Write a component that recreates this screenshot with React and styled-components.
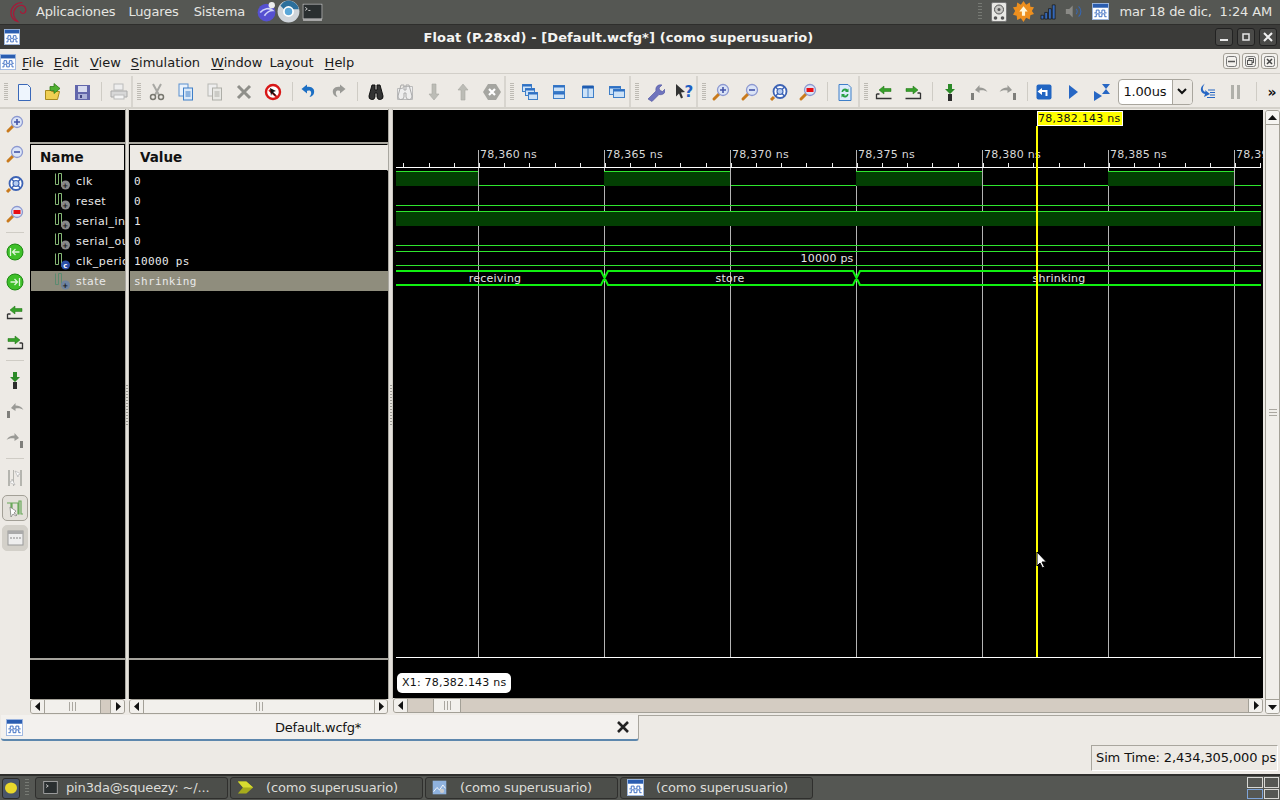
import React from "react";
import styled, { createGlobalStyle } from "styled-components";

const Global = createGlobalStyle`
  html, body { margin: 0; padding: 0; width: 1280px; height: 800px; overflow: hidden; background: #edeae5; }
  * { box-sizing: border-box; }
  #root { width: 1280px; height: 800px; }
`;
const Screen = styled.div`
  width: 1280px; height: 800px; display: flex; flex-direction: column;
  font-family: "DejaVu Sans", sans-serif; font-size: 13px; color: #111; background: #edeae5;
`;
const SysPanel = styled.div`
  height: 25px; background: #555753; border-bottom: 1px solid #2e2e2c; display: flex; align-items: center;
  color: #e6e6e2; padding: 0 8px 1px 9px; letter-spacing: -.15px;
`;
const PanelItem = styled.span`
  margin-left: ${p => p.$ml}px; white-space: nowrap;
`;
const PanelIcon = styled.span`
  display: flex; margin-left: ${p => p.$ml}px;
`;
const PanelGap = styled.div` flex: 1; `;
const PanelGrip = styled.div`
  width: 4px; height: 18px; margin-right: 9px;
  background: repeating-linear-gradient(to bottom, #777a74 0, #777a74 1px, transparent 1px, transparent 3px);
`;
const TitleBar = styled.div`
  height: 24px; background: #3b3b39; display: flex; align-items: center; padding: 0 3px 0 4px;
`;
const Title = styled.div`
  flex: 1; text-align: center; color: #f4f4f2; font-weight: bold; font-size: 13px; padding-left: 6px; letter-spacing: .1px;
`;
const WinBtn = styled.div`
  width: 18px; height: 18px; margin-left: 4px; border: 1px solid #222; border-radius: 3px; background: #4a4a48;
  display: flex; align-items: center; justify-content: center;
`;
const MenuBar = styled.div`
  height: 25px; background: #edeae5; display: flex; align-items: center; border-bottom: 1px solid #d2cfc9; padding: 2px 2px 0 0;
`;
const MenuItem = styled.span`
  margin-left: ${p => p.$ml}px; white-space: nowrap; color: #1a1a1a;
  u { text-underline-offset: 2px; }
`;
const MdiBtn = styled.div`
  width: 17px; height: 16px; margin: -2px 0 0 2px; border: 1px solid #a5a198; border-radius: 3px; background: #f3f1ed;
  display: flex; align-items: center; justify-content: center;
`;
const ToolBar = styled.div`
  height: 35px; background: #edeae5; display: flex; align-items: stretch; border-bottom: 2px solid #d4d1ca; padding-top: 2px;
`;
const ToolGroup = styled.div`
  display: flex; align-items: center; width: ${p => p.$w ? `${p.$w}px` : "auto"}; flex: none;
  border-right: ${p => p.$end ? "0" : "2px solid #d8d5cf"};
`;
const Grip = styled.div`
  width: ${p => p.$w}px; height: 100%; display: flex; align-items: center; padding-left: 4px; flex: none;
  &::before { content: ""; width: 4px; height: 18px;
    background: repeating-linear-gradient(to bottom, #bdbab3 0, #bdbab3 1px, transparent 1px, transparent 2px); }
`;
const Sep = styled.div`
  width: ${p => p.$w}px; height: 100%; padding: 6px 0 6px 5px; flex: none;
  &::before { content: ""; display: block; width: 1px; height: 100%; background: #cfccc5; }
`;
const Btn = styled.div`
  width: 29px; height: ${p => p.$h || 30}px; flex: none; display: flex; align-items: center; justify-content: center;
`;
const CheckedBtn = styled.div`
  width: 26px; height: 26px; margin: 2px 0 2px 2px; flex: none; display: flex; align-items: center; justify-content: center;
  border: 1px solid ${p => p.$border}; border-radius: 5px; background: ${p => p.$bg};
`;
const Combo = styled.div`
  width: 75px; height: 26px; margin-left: 1.5px; border: 1px solid #a9a69e; border-radius: 4px; background: #fff;
  display: flex; align-items: center; flex: none; padding-left: 5px; font-size: 13px; overflow: hidden; letter-spacing: -.2px;
`;
const ComboText = styled.span` flex: 1; `;
const ComboArrow = styled.span`
  width: 20px; height: 100%; background: #edeae5; border-left: 1px solid #a9a69e; display: flex; align-items: center; justify-content: center;
`;
const More = styled.span`
  padding-left: 9px; font-size: 14px; font-weight: bold; line-height: 16px;
`;
const Main = styled.div`
  height: 605px; display: flex; align-items: stretch; background: #edeae5;
`;
const SideBar = styled.div`
  width: 30px; flex: none; display: flex; flex-direction: column; background: #edeae5;
`;
const SideSep = styled.div`
  height: 8px; flex: none; padding: 3px 6px 4px;
  &::before { content: ""; display: block; height: 1px; background: #cfccc5; }
`;
const Splitter = styled.div`
  width: ${p => p.$w}px; flex: none; display: flex; align-items: center; justify-content: center;
  background: #e4e1db; border-left: 1px solid #a9a7a0; border-right: 1px solid #c9c6bf; margin-bottom: 15px; padding-top: 1px;
  &::before { content: ""; width: 2px; height: 40px;
    background: repeating-linear-gradient(to bottom, #9c9a93 0, #9c9a93 1px, transparent 1px, transparent 3px); }
`;
const Column = styled.div`
  width: ${p => p.$w}px; flex: none; display: flex; flex-direction: column; padding-top: 1px;
`;
const Blank = styled.div` height: 34px; background: #000; flex: none; border-bottom: 2px solid #aaa8a0; `;
const Header = styled.div`
  height: 27px; background: #edeae5; border: 1px solid #000; border-right-color: ${p => p.$rc || "#000"}; flex: none; display: flex; align-items: center;
  padding: 0 0 2px ${p => p.$pl}px; font-weight: bold; font-size: 13.5px; color: #111;
`;
const Rows = styled.div`
  flex: 1; background: #000; overflow: hidden;
`;
const Row = styled.div`
  height: 20px; display: flex; align-items: center; white-space: nowrap; overflow: hidden;
  background: ${p => p.$sel ? "#8f8d7d" : "#000"}; color: #e9e9e9; font-size: 11px; padding-left: ${p => p.$pl}px;
  margin-left: 1px;
  font-family: ${p => p.$mono ? '"DejaVu Sans Mono", monospace' : '"DejaVu Sans", sans-serif'};
  letter-spacing: ${p => p.$mono ? "0.35px" : "0.45px"};
`;
const SigIcon = styled.span` display: flex; margin-right: 6px; `;
const Foot = styled.div`
  height: 41px; flex: none; background: #000; border-top: 2px solid #a5a39c;
`;
const HScroll = styled.div`
  height: 15px; flex: none; display: flex; background: #d4ccc2; border: 1px solid #a3a097; border-radius: 3px; overflow: hidden;
`;
const ScrollBtn = styled.div`
  width: ${p => p.$w || 14}px; flex: ${p => p.$grow ? 1 : "none"}; background: #f2f0ec; display: flex; align-items: center; justify-content: center; border-left: ${p => p.$bl ? "1px solid #a3a097" : 0}; border-right: ${p => p.$br ? "1px solid #a3a097" : 0};
`;
const Thumb = styled.div`
  width: ${p => p.$w}px; flex: none; background: #f2f0ec; border-right: 1px solid #a3a097;
  display: flex; align-items: center; justify-content: center;
  &::before { content: ""; width: 7px; height: 9px; background: repeating-linear-gradient(to right, #aaa7a0 0, #aaa7a0 1px, transparent 1px, transparent 3px); }
`;
const Trough = styled.div` flex: ${p => p.$w ? `0 0 ${p.$w}px` : 1}; background: #d4ccc2; border-right: ${p => p.$w ? "1px solid #a3a097" : 0}; `;
const WaveCol = styled.div`
  width: 870px; flex: none; display: flex; flex-direction: column; padding-top: 1px;
`;
const WaveArea = styled.div`
  height: 588px; flex: none; background: #000; position: relative; overflow: hidden;
  svg { display: block; }
`;
const CursorTag = styled.div`
  position: absolute; left: 644px; top: 1px; height: 15px; width: 86px; background: #ffff00; border: 1px solid #fff; color: #111;
  font-size: 11px; line-height: 13px; white-space: nowrap; letter-spacing: .25px;
`;
const XTag = styled.div`
  position: absolute; left: 4px; top: 563px; height: 20px; width: 114px; background: #fff; border-radius: 5px; color: #111;
  font-size: 11px; line-height: 20px; padding-left: 5px; white-space: nowrap; letter-spacing: .2px;
`;
const Pointer = styled.svg`
  position: absolute; left: 643px; top: 441px;
`;
const VScroll = styled.div`
  width: 15px; margin-left: 2px; flex: none; display: flex; flex-direction: column; background: #f0eeea; border: 1px solid #a3a097; border-radius: 3px; margin-top: 1px; overflow: hidden;
`;
const VBtn = styled.div`
  height: 14px; flex: none; display: flex; align-items: center; justify-content: center; border-bottom: ${p => p.$b ? "1px solid #a3a097" : 0}; border-top: ${p => p.$t ? "1px solid #a3a097" : 0}; background: #f6f5f2;
`;
const VThumb = styled.div`
  flex: 1; display: flex; align-items: center; justify-content: center;
  &::before { content: ""; width: 8px; height: 7px; background: repeating-linear-gradient(to bottom, #aaa7a0 0, #aaa7a0 1px, transparent 1px, transparent 3px); }
`;
const TabRow = styled.div`
  height: 28px; display: flex; align-items: flex-start; padding-left: 1px; border-top: 1px solid transparent;
`;
const Tab = styled.div`
  width: 638px; height: 26px; margin-top: 0; background: #f3f1ee; border-bottom: 2px solid #5d87ad; border-right: 1px solid #a9a69e; display: flex; align-items: center; padding: 0 8px 0 5px; border-radius: 0 0 3px 3px;
`;
const TabLabel = styled.div` flex: 1; text-align: center; font-size: 13px; padding-right: 3px; letter-spacing: -.2px; `;
const TabEdge = styled.div` flex: 1; height: 1px; background: #a9a69e; `;
const Status = styled.div`
  height: 32px; display: flex; justify-content: flex-end; align-items: flex-end; padding: 0 2px 3px 0;
`;
const SimBox = styled.div`
  width: 187px; height: 26px; border: 1px solid #a9a69e; border-right-color: #fff; border-bottom-color: #fff; line-height: 24px; padding-left: 4px; font-size: 13px; white-space: nowrap; letter-spacing: -.12px;
`;
const TaskBar = styled.div`
  flex: 1; background: #555753; border-top: 2px solid #2e2e2c; display: flex; align-items: center; padding-left: 2px; color: #dcdcd8;
`;
const ShowDesk = styled.div`
  width: 18px; height: 21px; background: #4a5568; border: 1px solid #2c2c2a; border-radius: 3px; display: flex; align-items: center; justify-content: center; margin-right: 5px; flex: none;
`;
const TaskGrip = styled.div`
  width: 4px; height: 18px; margin-right: 6px; flex: none;
  background: repeating-linear-gradient(to bottom, #777a74 0, #777a74 1px, transparent 1px, transparent 3px);
`;
const TaskBtn = styled.div`
  width: 193px; height: 22px; margin-right: 2px; flex: none; background: #4c4e4a; border: 1px solid #2f2f2d; border-radius: 3px; display: flex; align-items: center; padding: 0 0 2px ${p => p.$pl}px; font-size: 13px; color: #dcdcd8; white-space: nowrap; overflow: hidden; letter-spacing: -.15px;
`;
const TaskIcon = styled.span` display: flex; margin-right: ${p => p.$mr}px; `;
const Pager = styled.div`
  margin-left: auto; width: 32px; height: 22px; display: grid; grid-template-columns: 1fr 1fr; grid-template-rows: 1fr 1fr; gap: 1px; margin-right: 1px;
`;
const PagerCell = styled.div`
  border: 1px solid ${p => p.$on ? "#7ea4d8" : "#d8d8d4"};
`;

const S = ({ s = 20, children, vb = "0 0 20 20" }) => <svg width={s} height={s} viewBox={vb}>{children}</svg>;

const WaveLogo = ({ s = 18 }) => (
  <S s={s} vb="0 0 18 18">
    <rect x=".5" y=".5" width="17" height="17" fill="#fff" stroke="#9db7e0" />
    <rect x="1" y="1" width="16" height="4" fill="#2a5db0" />
    <path d="M2.500 10.500h2v-3h3v3h3v-3h3v3h2M2.500 14.500h2v-3h3v3h3v-3h3v3h2" fill="none" stroke="#3568c0" strokeWidth="1" />
  </S>
);
const Page = ({ stroke = "#3f7fc8", fill = "#fff", x = 4, y = 2, w = 12, h = 16 }) => <rect x={x} y={y} width={w} height={h} fill={fill} stroke={stroke} />;
const New = () => <S><path d="M4.500 2.500h9l3 3v13h-12z" fill="#eef5fd" stroke="#3a68b8" /></S>;
const Open = () => <S><path d="M2.500 8.500h5l1 1h8l-2 8h-12z" fill="#f0cf52" stroke="#a98a1e" /><path d="M11 1.500v3H7v4h4v3l6-5z" fill="#4fb030" stroke="#2f7a18" strokeWidth=".8" /></S>;
const Save = () => <S><rect x="3" y="3" width="15" height="15" fill="#6266ab" /><rect x="6" y="4" width="9" height="6" fill="#d8dcef" /><rect x="6" y="12" width="9" height="5" fill="#aab0d8" /><rect x="8" y="13" width="2" height="3" fill="#404480" /></S>;
const Print = () => <S><rect x="5" y="2" width="9" height="6" fill="#eee" stroke="#bbb" /><path d="M2 9h16v6H2z" fill="#d8d8d8" stroke="#aaa" /><rect x="5" y="13" width="10" height="4" fill="#f4f4f4" stroke="#bbb" /></S>;
const Cut = () => <S><path d="M6 2l6 11M14 2L8 13" stroke="#a8a8a4" strokeWidth="2" /><circle cx="6" cy="15" r="2.500" fill="none" stroke="#77776f" strokeWidth="1.500" /><circle cx="14" cy="15" r="2.500" fill="none" stroke="#77776f" strokeWidth="1.500" /></S>;
const Copy = () => <S><Page x="3" y="2" w="9" h="12" fill="#eaf2fb" stroke="#5a8fd0" /><Page x="7.500" y="6" w="9" h="12" fill="#dbe9f8" stroke="#3f7fc8" /><path d="M9.500 10h5M9.500 12h5M9.500 14h5" stroke="#3f7fc8" /></S>;
const Paste = () => <S><Page x="3" y="2" w="9" h="12" fill="#eee" stroke="#b8b8b4" /><Page x="7.500" y="6" w="9" h="12" fill="#e8e8e4" stroke="#aeaea8" /><path d="M9.500 10h5M9.500 12h5M9.500 14h5" stroke="#aeaea8" /></S>;
const Del = () => <S><path d="M4 4l12 12M16 4L4 16" stroke="#8f8f8a" strokeWidth="3" /></S>;
const NoSign = () => <S><circle cx="10" cy="10" r="7" fill="#fff" stroke="#d81818" strokeWidth="2.400" /><path d="M6 8l9 8" stroke="#d81818" strokeWidth="2" /><path d="M7 6l6 3-3 1 3 3-1 1-3-3-1 3z" fill="#111" /></S>;
const Undo = ({ c = "#1c6fc4", flip }) => <S><g transform={flip ? "matrix(-1 0 0 1 20 0)" : undefined}><path d="M7 5c6-1.500 9 2 8 6-.5 2-2 3.500-4.500 4 1.500-2 2-3.500 1.500-5C12 8.500 10 8 7 9z" fill={c} /><path d="M8 2.500v9L2.500 7z" fill={c} /></g></S>;
const Binoc = ({ c = "#333", bg }) => <S>{bg && <path d="M2.500 6.500h5l1-2h9v13h-15z" fill="#eee" stroke="#bbb" />}<path d="M6 3h3v5h2V3h3l3 11a3 3 0 0 1-6 1v-4H9v4a3 3 0 0 1-6-1z" fill={bg ? "none" : c} stroke={bg ? c : "#111"} strokeWidth="1" /></S>;
const GrayArrow = ({ up }) => <S><path d={up ? "M8 18V8H5l5-6 5 6h-3v10z" : "M8 2v10H5l5 6 5-6h-3V2z"} fill="#bcbcb6" stroke="#a8a8a2" strokeWidth=".6" /></S>;
const Stop = () => <S><path d="M6 2h8l5 8-5 8H6l-5-8z" fill="#a5a5a0" /><path d="M7 7l6 6M13 7l-6 6" stroke="#fff" strokeWidth="2.200" /></S>;
const Win = ({ x, y, w, h }) => <g><rect x={x} y={y} width={w} height={h} fill="#cde2f7" stroke="#3f7fc8" /><rect x={x} y={y} width={w} height="2" fill="#2f70c4" /></g>;
const Cascade = () => <S><Win x="2.500" y="2.500" w="9" h="7" /><Win x="5.500" y="6.500" w="9" h="7" /><Win x="8.500" y="10.500" w="9" h="7" /></S>;
const Horiz = () => <S><Win x="4.500" y="3.500" w="11" h="6" /><Win x="4.500" y="10.500" w="11" h="6" /></S>;
const Vert = () => <S><rect x="4.500" y="4.500" width="11" height="11" fill="#cde2f7" stroke="#3f7fc8" /><rect x="4.500" y="3.500" width="11" height="3" fill="#1f5cb0" /><path d="M10 6v9" stroke="#3f7fc8" /></S>;
const Tile = () => <S><Win x="2.500" y="4.500" w="11" h="8" /><Win x="6.500" y="7.500" w="11" h="8" /></S>;
const Wrench = () => <S><path d="M3 17l8-8c-1-4 2-7 6-6l-3 3 1 2.500 2.500 1 3-3c.5 4-2.500 7-6.500 6l-7 7z" fill="#6f74bd" stroke="#4d52a0" strokeWidth=".6" /></S>;
const Help = () => <S><path d="M2 2l9 8-4 .5 2 5-2 1-2-5-3 3z" fill="#333" /><text x="10.500" y="15" fontFamily="DejaVu Sans" fontWeight="bold" fontSize="15" fill="#1f5fc4">?</text></S>;
const Lens = ({ children }) => <S><path d="M8 12l-5 5" stroke="#c97a1c" strokeWidth="3" strokeLinecap="round" /><circle cx="12" cy="8" r="5.500" fill="#dbe4f6" stroke="#8c98d0" strokeWidth="1.300" />{children}</S>;
const ZIn = () => <Lens><path d="M9 8h6M12 5v6" stroke="#4454a8" strokeWidth="1.600" /></Lens>;
const ZOut = () => <Lens><path d="M9 8h6" stroke="#4454a8" strokeWidth="1.600" /></Lens>;
const ZFit = () => <S><path d="M5 15l-3 3" stroke="#c97a1c" strokeWidth="3" /><circle cx="11" cy="9.500" r="6.500" fill="#fff" stroke="#3d63b5" strokeWidth="1.800" /><circle cx="11" cy="9.500" r="3" fill="#b6cdf2" stroke="#3d63b5" strokeWidth="1.100" /><path d="M6.500 5l2.500 2.500M15.500 5L13 7.500M6.500 14l2.500-2.500M15.500 14L13 11.500" stroke="#3d63b5" strokeWidth="1.500" /></S>;
const ZRed = () => <Lens><rect x="8.500" y="6" width="7" height="4" fill="#e80e14" /></Lens>;
const Refresh = () => <S><path d="M4 2.500h9l3 3v13H4z" fill="#dcebfb" stroke="#3f7fc8" /><path d="M6.500 10a3.500 3.500 0 0 1 6-2.500l1-1v3.500H10l1-1a2 2 0 0 0-3 1zM13.500 12a3.500 3.500 0 0 1-6 2.500l-1 1V12H10l-1 1a2 2 0 0 0 3-1z" fill="#27a045" /></S>;
const TrayL = () => <S><path d="M2.500 12v4.500h15M2.500 12h3" fill="none" stroke="#333" strokeWidth="1.300" /><path d="M5 8l5-4v2.500h7v3h-7V12z" fill="#36a02a" stroke="#1d7010" strokeWidth=".5" /></S>;
const TrayR = () => <S><path d="M17.500 11v5.500h-15M17.500 11h-3" fill="none" stroke="#333" strokeWidth="1.300" /><path d="M15 8l-5-4v2.500H3v3h7V12z" fill="#36a02a" stroke="#1d7010" strokeWidth=".5" /></S>;
const Mark = () => <S><path d="M8 2h4v5h3l-5 5-5-5h3z" fill="#2c8a28" /><rect x="8" y="12" width="4" height="7" fill="#2d2d2d" /></S>;
const Prev = ({ flip }) => <S><g transform={flip ? "matrix(-1 0 0 1 20 0)" : undefined} fill="#9a9a96"><rect x="2" y="11" width="3" height="7" fill="#7f7f7b" /><path d="M6 8l4.500-5v2.500c3.500 0 6 1 8 4.500-2-1.500-4.500-2-8-1.500V11z" /></g></S>;
const Restart = () => <S><rect x="2.500" y="2.500" width="15" height="15" rx="2" fill="#2165c2" /><path d="M3.500 9.500L8 6v2h5.500v6h-2v-4H8v3z" fill="#fff" /></S>;
const Run = () => <S><path d="M6 3l9 7-9 7z" fill="#2767c4" /></S>;
const RunFor = () => <S><path d="M2 9l8 5-8 5z" fill="#2767c4" /><path d="M10 2h8l-4 5 4 5h-8l4-5z" fill="#2767c4" /></S>;
const Step = () => <S><path d="M8 1.500C2 5 3 11 8 12l-1 3 6-3-5-4 .5 2C5 9 5 5 8 1.500z" fill="#2767c4" /><path d="M11 8h7M13 10.500h5M13 13h5M10 15.500h8" stroke="#2767c4" strokeWidth="1.200" /></S>;
const Pause = () => <S><rect x="5" y="3" width="3" height="14" fill="#b0b0aa" /><rect x="11" y="3" width="3" height="14" fill="#b0b0aa" /></S>;
const GreenC = ({ right }) => <S><circle cx="10" cy="10" r="8" fill="#3fc02a" stroke="#1f8a14" /><g transform={right ? "matrix(-1 0 0 1 20 0)" : undefined}><path d="M5.500 6v8M14.500 10H8M10.500 7L7.500 10l3 3" fill="none" stroke="#dff5da" strokeWidth="1.300" /></g></S>;
const Snap = () => <S><path d="M3 2h2v16H3zM8 2h1v16H8zM15 2h2v16h-2z" fill="#b5b5af" /><path d="M10 3l6 3-3 1v2zM10 17l-6-3 3-1v-2z" fill="#fff" stroke="#aaa" strokeWidth=".6" /></S>;
const Wave2 = () => <S><path d="M2 5h4v11h1V5h6v11h1V3h2v13h2" fill="none" stroke="#69a85a" strokeWidth="1.200" /><path d="M5 9l1 10 2-3 3 2 1-1-3-2 2-2z" fill="#fff" stroke="#777" strokeWidth=".7" /></S>;
const Cols = () => <S><rect x="3" y="3" width="15" height="14" fill="#eee" stroke="#999" /><rect x="3" y="3" width="15" height="3" fill="#aaa" /><path d="M6 9v2M9 9v2M12 9v2M15 9v2" stroke="#888" /></S>;

const Sig = ({ kind }) => (
  <SigIcon>
    <svg width="16" height="18" viewBox="0 0 16 18">
      <path d="M1.500 1.500v11h3V1.500h3v13" fill="none" stroke={kind === "sel" ? "#5c8a70" : "#86b876"} strokeWidth="1" />
      <circle cx="11.500" cy="13" r="4.500" fill={kind === "c" ? "#2c4fa8" : kind === "sel" ? "#6f84a0" : "#888"} />
      <text x="11.500" y="15.500" textAnchor="middle" fontSize="7" fontFamily="DejaVu Sans" fontWeight="bold" fill={kind === "c" ? "#fff" : "#111"}>{kind === "c" ? "c" : "+"}</text>
    </svg>
  </SigIcon>
);
const ArrowL = () => <svg width="6" height="9" viewBox="0 0 6 9"><path d="M5 0v9L0 4.500z" fill="#111" /></svg>;
const ArrowR = () => <svg width="6" height="9" viewBox="0 0 6 9"><path d="M1 0v9l5-4.500z" fill="#111" /></svg>;
const ArrowU = () => <svg width="9" height="6" viewBox="0 0 9 6"><path d="M0 5h9L4.500 0z" fill="#111" /></svg>;
const ArrowD = () => <svg width="9" height="6" viewBox="0 0 9 6"><path d="M0 1h9L4.500 6z" fill="#111" /></svg>;

const majors = [0, 1, 2, 3, 4, 5, 6].map(i => 85.5 + i * 126);
const labels = ["78,360 ns", "78,365 ns", "78,370 ns", "78,375 ns", "78,380 ns", "78,385 ns", "78,390 ns"];
const minor = [];
for (let x = 10.3; x < 868; x += 25.2) minor.push(x);
const Y = y => y - 110;
const thin = "#2ee62e";
const fillG = "#033f03";
const W0 = 3, W1 = 868;

const Wave = () => (
  <svg width="870" height="588" viewBox="0 0 870 588">
    <g stroke="#b4b4b4" strokeWidth="1">
      {majors.map(x => <line key={x} x1={x} x2={x} y1={Y(150)} y2={Y(657)} />)}
    </g>
    <g stroke="#ececec" strokeWidth="1">
      {minor.map(x => <line key={x} x1={Math.round(x) + .5} x2={Math.round(x) + .5} y1={Y(163)} y2={Y(167)} />)}
    </g>
    <line x1={W0} x2={W1} y1={Y(167.5)} y2={Y(167.5)} stroke="#fff" />
    <line x1={W0} x2={W1} y1={Y(657.5)} y2={Y(657.5)} stroke="#fff" />
    <g fontFamily="DejaVu Sans" fontSize="11" fill="#d8d8d8" letterSpacing=".25">
      {labels.map((t, i) => <text key={t} x={majors[i] + 1.500} y={Y(158)}>{t}</text>)}
    </g>
    {[[W0, 85], [211, 337], [463, 589], [715, 841]].map(([a, b]) => (
      <g key={a}>
        <rect x={a} y={Y(172)} width={b - a} height="14" fill={fillG} />
        <line x1={a} x2={b} y1={Y(171.5)} y2={Y(171.5)} stroke={thin} />
      </g>
    ))}
    {[[86, 211], [338, 463], [590, 715], [842, W1]].map(([a, b]) => (
      <line key={a} x1={a} x2={b} y1={Y(185.5)} y2={Y(185.5)} stroke={thin} />
    ))}
    <line x1={W0} x2={W1} y1={Y(205.5)} y2={Y(205.5)} stroke={thin} />
    <rect x={W0} y={Y(212)} width={W1 - W0} height="14" fill={fillG} />
    <line x1={W0} x2={W1} y1={Y(211.5)} y2={Y(211.5)} stroke={thin} />
    <line x1={W0} x2={W1} y1={Y(245.5)} y2={Y(245.5)} stroke={thin} />
    <line x1={W0} x2={W1} y1={Y(251.5)} y2={Y(251.5)} stroke={thin} />
    <line x1={W0} x2={W1} y1={Y(265.5)} y2={Y(265.5)} stroke={thin} />
    <path d={`M${W0} ${Y(271)}H208L215 ${Y(285)}H460L467 ${Y(271)}H${W1}M${W0} ${Y(285)}H208L215 ${Y(271)}H460L467 ${Y(285)}H${W1}`} fill="none" stroke="#10f010" strokeWidth="2" />
    <g fontFamily="DejaVu Sans" fontSize="11" fill="#e6e6e6" textAnchor="middle" letterSpacing=".25">
      <text x="102" y={Y(282)}>receiving</text>
      <text x="337" y={Y(282)}>store</text>
      <text x="666" y={Y(282)}>shrinking</text>
      <text x="434" y={Y(262)}>10000 ps</text>
    </g>
    <rect x="643" y={Y(126)} width="2" height="531" fill="#ffff00" />
  </svg>
);

const Tool = ({ children }) => <Btn $h={32}>{children}</Btn>;
const Side = ({ children }) => <Btn>{children}</Btn>;
const names = [["clk", "0"], ["reset", "0"], ["serial_in", "1"], ["serial_out", "0"], ["clk_period", "10000 ps", "c"], ["state", "shrinking", "sel"]];

const Menu = ({ ml, u, rest }) => <MenuItem $ml={ml}><u>{u}</u>{rest}</MenuItem>;

export default function App() {
  return (
    <Screen>
      <Global />
      <SysPanel>
        <svg width="19" height="22" viewBox="0 0 20 22"><path d="M14 1C7 1 2 6 2 12c0 4 3 8 7 9-3-3-5-6-4-10 1-5 5-7.500 9-7 4 1 5 6 2 8-2 1-4 0-4-2" fill="none" stroke="#a81838" strokeWidth="1.300" /></svg>
        <PanelItem $ml={8}>Aplicaciones</PanelItem>
        <PanelItem $ml={13}>Lugares</PanelItem>
        <PanelItem $ml={15}>Sistema</PanelItem>
        <PanelIcon $ml={11}><S s={21}><circle cx="10" cy="11" r="8.500" fill="#5550d0" /><path d="M4 11c3-4 9-5 12-2-3 0-6 2-8 5" fill="none" stroke="#d0d4f8" strokeWidth="1.500" /><circle cx="15" cy="4" r="3" fill="#eee" /></S></PanelIcon>
        <PanelIcon $ml={0}><S s={23}><circle cx="10" cy="10" r="9.500" fill="#cfd4da" /><path d="M10 .5A9.500 9.500 0 0 1 19 8H10a3 3 0 0 0-3 1L3 5A9.500 9.500 0 0 1 10 .5z" fill="#2c6f9c" /><circle cx="10" cy="10" r="4" fill="#5aa6d8" stroke="#fff" strokeWidth="1.500" /></S></PanelIcon>
        <PanelIcon $ml={2}><S s={21}><rect x="1" y="3" width="18" height="14" fill="#2a2f30" stroke="#ccc" strokeWidth=".6" /><path d="M3 6l2 1.500-2 1.500M6 9h2" stroke="#ddd" fill="none" strokeWidth=".8" /><rect x="1" y="17" width="18" height="2" fill="#aaa" /></S></PanelIcon>
        <PanelGap />
        <PanelGrip />
        <svg width="16" height="20" viewBox="0 0 16 20"><rect x=".5" y=".5" width="15" height="19" rx="1.500" fill="#e8e8e4" stroke="#777" /><circle cx="8" cy="7.500" r="4.500" fill="#c8c8c4" stroke="#555" /><circle cx="8" cy="7.500" r="1.500" fill="#555" /><circle cx="4.500" cy="16" r="1.800" fill="#555" /><circle cx="11.500" cy="16" r="1.800" fill="#555" /></svg>
        <PanelIcon $ml={6}><S s={21}><path d="M10 0l2.500 3.500L16 1.500l.5 4 3.500.5-2 3.500 2 3-3.500 1-.5 4-3.500-1.500L10 20l-2.500-3.500L4 18l-.5-4L0 13l2-3.500L0 6l3.500-.5L4 1.500l3.500 2z" fill="#ed8f1e" /><path d="M10 5l4 5h-2.500v4h-3v-4H6z" fill="#fff6d8" /></S></PanelIcon>
        <PanelIcon $ml={6}><S s={17} vb="0 0 18 18"><path d="M1 17v-4h3v4zM5 17V10h3v7zM9 17V6h3v11zM13 17V2h3v15z" fill="#3568b8" stroke="#111" strokeWidth=".7" /></S></PanelIcon>
        <PanelIcon $ml={8}><S s={17}><path d="M1 7h4l4-4v14l-4-4H1z" fill="#8a8a86" /><path d="M13 7a4 4 0 0 1 0 6M16 4a8 8 0 0 1 0 12" stroke="#3568b8" fill="none" strokeWidth="1.200" /></S></PanelIcon>
        <PanelIcon $ml={10}><WaveLogo s={17} /></PanelIcon>
        <PanelItem $ml={10}>mar 18 de dic,&nbsp; 1:24 AM</PanelItem>
      </SysPanel>
      <TitleBar>
        <WaveLogo s={16} />
        <Title>Float (P.28xd) - [Default.wcfg*] (como superusuario)</Title>
        <WinBtn><svg width="10" height="10"><rect x="1" y="7" width="8" height="2" fill="#e8e8e8" /></svg></WinBtn>
        <WinBtn><svg width="10" height="10"><rect x="2" y="2" width="6" height="6" fill="none" stroke="#e8e8e8" strokeWidth="1.500" /></svg></WinBtn>
        <WinBtn><svg width="10" height="10"><path d="M1 1l8 8M9 1L1 9" stroke="#f0f0f0" strokeWidth="2" /></svg></WinBtn>
      </TitleBar>
      <MenuBar>
        <WaveLogo s={16} />
        <Menu ml={6} u="F" rest="ile" />
        <Menu ml={10} u="E" rest="dit" />
        <Menu ml={11} u="V" rest="iew" />
        <Menu ml={10} u="S" rest="imulation" />
        <Menu ml={11} u="W" rest="indow" />
        <MenuItem $ml={7}>La<u>y</u>out</MenuItem>
        <Menu ml={11} u="H" rest="elp" />
        <PanelGap />
        <MdiBtn><svg width="11" height="11"><rect x=".5" y=".5" width="10" height="10" rx="2" fill="none" stroke="#777" /><path d="M2 5.500h7" stroke="#555" strokeWidth="1.500" /></svg></MdiBtn>
        <MdiBtn><svg width="11" height="11"><rect x=".5" y=".5" width="10" height="10" rx="2" fill="none" stroke="#777" /><rect x="4" y="2.500" width="4.500" height="4" fill="none" stroke="#555" /><rect x="2.500" y="4.500" width="4.500" height="4" fill="#f3f1ed" stroke="#555" /></svg></MdiBtn>
        <MdiBtn><svg width="11" height="11"><rect x=".5" y=".5" width="10" height="10" rx="2" fill="none" stroke="#777" /><path d="M3 3l5 5M8 3l-5 5" stroke="#444" strokeWidth="1.500" /></svg></MdiBtn>
      </MenuBar>
      <ToolBar>
        <ToolGroup $w={133}>
          <Grip $w={9} /><Tool><New /></Tool><Tool><Open /></Tool><Tool><Save /></Tool><Sep $w={8} /><Tool><Print /></Tool>
        </ToolGroup>
        <ToolGroup $w={373}>
          <Grip $w={9} /><Tool><Cut /></Tool><Tool><Copy /></Tool><Tool><Paste /></Tool><Tool><Del /></Tool><Tool><NoSign /></Tool><Sep $w={7} />
          <Tool><Undo /></Tool><Tool><Undo c="#9a9a96" flip /></Tool><Sep $w={9} />
          <Tool><Binoc /></Tool><Tool><Binoc c="#aaa" bg /></Tool><Tool><GrayArrow /></Tool><Tool><GrayArrow up /></Tool><Tool><Stop /></Tool>
        </ToolGroup>
        <ToolGroup $w={125}>
          <Grip $w={9} /><Tool><Cascade /></Tool><Tool><Horiz /></Tool><Tool><Vert /></Tool><Tool><Tile /></Tool>
        </ToolGroup>
        <ToolGroup $w={67}>
          <Grip $w={9} /><Tool><Wrench /></Tool><Tool><Help /></Tool>
        </ToolGroup>
        <ToolGroup $w={162}>
          <Grip $w={8} /><Tool><ZIn /></Tool><Tool><ZOut /></Tool><Tool><ZFit /></Tool><Tool><ZRed /></Tool><Sep $w={8} /><Tool><Refresh /></Tool>
        </ToolGroup>
        <ToolGroup $end>
          <Grip $w={9} /><Tool><TrayL /></Tool><Tool><TrayR /></Tool><Sep $w={8} />
          <Tool><Mark /></Tool><Tool><Prev /></Tool><Tool><Prev flip /></Tool><Sep $w={7} />
          <Tool><Restart /></Tool><Tool><Run /></Tool><Tool><RunFor /></Tool>
          <Combo><ComboText>1.00us</ComboText><ComboArrow><svg width="10" height="7"><path d="M1 1l4 4 4-4" fill="none" stroke="#111" strokeWidth="2" /></svg></ComboArrow></Combo>
          <Tool><Step /></Tool><Tool><Pause /></Tool><Sep $w={8} />
          <More>»</More>
        </ToolGroup>
      </ToolBar>
      <Main>
        <SideBar>
          <Side><ZIn /></Side><Side><ZOut /></Side><Side><ZFit /></Side><Side><ZRed /></Side><SideSep />
          <Side><GreenC /></Side><Side><GreenC right /></Side><Side><TrayL /></Side><Side><TrayR /></Side><SideSep />
          <Side><Mark /></Side><Side><Prev /></Side><Side><Prev flip /></Side><SideSep />
          <Side><Snap /></Side>
          <CheckedBtn $bg="#e4e1db" $border="#a3a097"><Wave2 /></CheckedBtn>
          <CheckedBtn $bg="#d3d0c9" $border="#d3d0c9"><Cols /></CheckedBtn>
        </SideBar>
        <Column $w={95}>
          <Blank />
          <Header $pl={9}>Name</Header>
          <Rows>
            {names.map(([n, , k]) => (
              <Row key={n} $sel={k === "sel"} $pl={23}><Sig kind={k} />{n}</Row>
            ))}
          </Rows>
          <Foot />
          <HScroll><ScrollBtn $br><ArrowL /></ScrollBtn><Thumb $w={56} /><Trough /><ScrollBtn $bl><ArrowR /></ScrollBtn></HScroll>
        </Column>
        <Splitter $w={4} />
        <Column $w={259}>
          <Blank />
          <Header $pl={10} $rc="#edeae5">Value</Header>
          <Rows>
            {names.map(([n, v, k]) => (
              <Row key={n} $sel={k === "sel"} $pl={4} $mono>{v}</Row>
            ))}
          </Rows>
          <Foot />
          <HScroll><ScrollBtn $br><ArrowL /></ScrollBtn><Thumb $w={231} /><ScrollBtn $grow><ArrowR /></ScrollBtn></HScroll>
        </Column>
        <Splitter $w={5} />
        <WaveCol>
          <WaveArea>
            <Wave />
            <CursorTag>78,382.143 ns</CursorTag>
            <XTag>X1: 78,382.143 ns</XTag>
            <Pointer width="12" height="18" viewBox="0 0 12 18"><path d="M1 1v14l3-3 2.500 5 2-1-2.500-5h4.500z" fill="#fff" stroke="#000" /></Pointer>
          </WaveArea>
          <HScroll><ScrollBtn $br><ArrowL /></ScrollBtn><Trough $w={26} /><Thumb $w={27} /><Trough /><ScrollBtn $bl><ArrowR /></ScrollBtn></HScroll>
        </WaveCol>
        <VScroll>
          <VBtn $b><ArrowU /></VBtn>
          <VThumb />
          <VBtn $t><ArrowD /></VBtn>
        </VScroll>
      </Main>
      <TabRow>
        <Tab><WaveLogo s={17} /><TabLabel>Default.wcfg*</TabLabel><svg width="14" height="14"><path d="M2 2l10 10M12 2L2 12" stroke="#222" strokeWidth="2.600" /></svg></Tab>
        <TabEdge />
      </TabRow>
      <Status><SimBox>Sim Time: 2,434,305,000 ps</SimBox></Status>
      <TaskBar>
        <ShowDesk><svg width="14" height="14"><ellipse cx="7" cy="7" rx="6" ry="5.500" fill="#e9d82c" /></svg></ShowDesk>
        <TaskGrip />
        <TaskBtn $pl={7}><TaskIcon $mr={8}><S s={15}><rect x="1" y="2" width="18" height="16" fill="#2a2f30" stroke="#bbb" /><path d="M4 6l3 2-3 2" stroke="#ddd" fill="none" /></S></TaskIcon>pin3da@squeezy: ~/...</TaskBtn>
        <TaskBtn $pl={6}><TaskIcon $mr={12}><S s={17}><path d="M1 3h10l8 7-8 7H1l6-7z" fill="#a6ab1c" /><path d="M1 3h10l8 7H7z" fill="#d8dc30" /></S></TaskIcon>(como superusuario)</TaskBtn>
        <TaskBtn $pl={5}><TaskIcon $mr={12}><S s={17}><rect x="2" y="2" width="16" height="16" fill="#8fb2de" /><path d="M3 15l4-5 3 3 4-6 3 4" stroke="#fff" fill="none" /><circle cx="13" cy="14" r="2.500" fill="#ccc" /></S></TaskIcon>(como superusuario)</TaskBtn>
        <TaskBtn $pl={6}><TaskIcon $mr={12}><WaveLogo s={17} /></TaskIcon>(como superusuario)</TaskBtn>
        <Pager><PagerCell /><PagerCell /><PagerCell $on /><PagerCell /></Pager>
      </TaskBar>
    </Screen>
  );
}
